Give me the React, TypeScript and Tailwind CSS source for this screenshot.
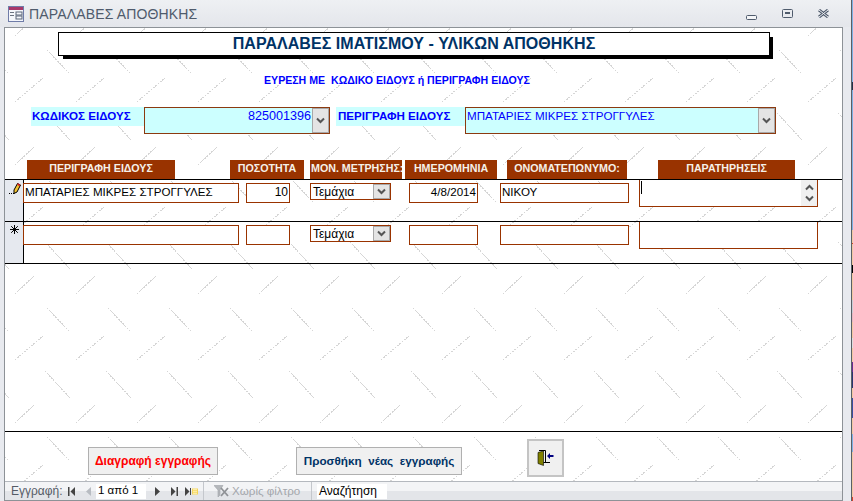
const desktopStrip = [
  'h-[82px] bg-[#7fb2e3]',
  'h-[8px] bg-[#223047]',
  'h-[140px] bg-[#7fb2e3]',
  'h-[13px] bg-[#f2c9a2]',
  'h-px bg-[#d8402a]',
  'h-[21px] bg-[#f2c9a2]',
  'h-[8px] bg-[#000000]',
  'h-[27px] bg-[#f2c9a2]',
  'h-[13px] bg-[#c9ced6]',
  'h-[9px] bg-[#e6b8c2]',
  'h-[16px] bg-[#f2c9a2]',
  'h-[10px] bg-[#dddddd]',
  'h-[14px] bg-[#f2c9a2]',
  'h-[10px] bg-[#6a2c91]',
  'h-[16px] bg-[#2a3570]',
  'h-[10px] bg-[#f2c9a2]',
  'h-[20px] bg-[#3a4ea0]',
  'h-[16px] bg-[#f2c9a2]',
  'h-[18px] bg-[#7fb2e3]',
  'h-[45px] bg-[#f2c9a2]',
  'h-[4px] bg-[#d8402a]',
]

const FormIcon = () => (
  <svg width="16" height="16" viewBox="0 0 16 16" className="mr-[5px] shrink-0">
    <rect x="0.5" y="0.5" width="15" height="15" fill="#f4f6fb" stroke="#6f7ca8" />
    <rect x="1" y="1" width="14" height="3" fill="#a8386a" />
    <rect x="2" y="6" width="4" height="1" fill="#6b7280" />
    <rect x="2" y="9" width="4" height="1" fill="#6b7280" />
    <rect x="8" y="6" width="6" height="3" fill="none" stroke="#5a6478" strokeWidth="1" />
    <rect x="8" y="10" width="6" height="3" fill="none" stroke="#5a6478" strokeWidth="1" />
  </svg>
)

const ComboArrow = ({ className }: { className: string }) => (
  <div className={`flex items-center justify-center border border-[#a8a8a8] bg-[#e4e4e4] ${className}`}>
    <svg width="9" height="7" viewBox="0 0 9 7">
      <path d="M1 1.5 L4.5 5 L8 1.5" fill="none" stroke="#555" strokeWidth="2" />
    </svg>
  </div>
)

const Pencil = () => (
  <svg width="13" height="14" viewBox="0 0 13 14">
    <path d="M6 8 L9.5 1.5 L12.5 3 L9 10 L6 11.5 Z" fill="#f2c230" stroke="#000" strokeWidth="1" />
    <path d="M9.5 2 L12 3.5" stroke="#d02020" strokeWidth="2" />
    <rect x="1" y="11" width="1" height="1" fill="#000" />
    <rect x="3" y="11" width="1" height="1" fill="#000" />
    <rect x="5" y="11" width="1" height="1" fill="#000" />
  </svg>
)

const NewRowStar = () => (
  <svg width="9" height="9" viewBox="0 0 9 9">
    <path d="M4.5 0 V9 M0 4.5 H9 M1.2 1.2 L7.8 7.8 M7.8 1.2 L1.2 7.8" stroke="#000" strokeWidth="1" />
  </svg>
)

const DoorIcon = () => (
  <svg width="18" height="16" viewBox="0 0 18 16">
    <path d="M1 2.5 L1 13.5 L6.5 15.5 L6.5 1 Z" fill="#808000" stroke="#000" strokeWidth="0.6" />
    <path d="M2 0.5 H8.5 V12.5 M6.5 12.5 H13" fill="none" stroke="#000" strokeWidth="1" />
    <path d="M10 6 L13 3 V5 H16.5 V7 H13 V9 Z" fill="#000080" />
  </svg>
)

const NavFirst = () => (
  <svg width="7" height="9" viewBox="0 0 7 9">
    <rect x="0" y="0" width="1.5" height="9" fill="#444" />
    <path d="M7 0 V9 L2.5 4.5 Z" fill="#444" />
  </svg>
)

const NavPrev = () => (
  <svg width="5" height="9" viewBox="0 0 5 9">
    <path d="M5 0 V9 L0 4.5 Z" fill="#b8bcc2" />
  </svg>
)

const NavNext = () => (
  <svg width="5" height="9" viewBox="0 0 5 9">
    <path d="M0 0 V9 L5 4.5 Z" fill="#444" />
  </svg>
)

const NavLast = () => (
  <svg width="7" height="9" viewBox="0 0 7 9">
    <path d="M0 0 V9 L4.5 4.5 Z" fill="#444" />
    <rect x="5.5" y="0" width="1.5" height="9" fill="#444" />
  </svg>
)

const NavNew = () => (
  <svg width="13" height="9" viewBox="0 0 13 9">
    <path d="M0 0 V9 L4.5 4.5 Z" fill="#444" />
    <rect x="5" y="1" width="1" height="7" fill="#444" />
    <rect x="7" y="1.5" width="6" height="6" fill="#f3d35a" />
    <path d="M8 2.5 H12 M8 4.5 H12 M8 6.5 H12 M9 1.5 V7.5 M11 1.5 V7.5" stroke="#fff3b8" strokeWidth="0.7" />
  </svg>
)

const FilterIcon = () => (
  <svg width="15" height="13" viewBox="0 0 15 13">
    <path d="M0 0.5 H9 L6 5 V10 L4 12 V5 Z" fill="#b4b7bb" stroke="#a0a3a8" strokeWidth="0.6" />
    <path d="M7 3 L14 11 M14 3 L7 11" stroke="#8f9296" strokeWidth="1.8" />
  </svg>
)

const RecordRow = ({ filled }: { filled: boolean }) => (
  <div className="flex h-[42px] items-start border-b border-black text-[11.6px]">
    <div className="flex h-full w-[19px] shrink-0 justify-center border-r border-black bg-[#e6e9ef] pt-[2px]">
      {filled ? <Pencil /> : <div className="pl-[1px] pt-[1px]"><NewRowStar /></div>}
    </div>
    <div className="-ml-px mt-[3px] flex h-[20px] w-[216px] items-center border border-[#993300] bg-white pb-[2px] pl-[1px] text-black">
      {filled && 'ΜΠΑΤΑΡΙΕΣ ΜΙΚΡΕΣ ΣΤΡΟΓΓΥΛΕΣ'}
    </div>
    <div className="ml-[7px] mt-[3px] flex h-[20px] w-[44px] items-center justify-end border border-[#993300] bg-white pb-[2px] pr-[1px] text-[12px] text-black">
      {filled && '10'}
    </div>
    <div className="ml-[20px] mt-[3px] flex h-[17px] w-[81px] items-center justify-between border border-[#993300] bg-white pl-[2px] text-[12px] text-black">
      Τεμάχια
      <ComboArrow className="h-[15px] w-[17px]" />
    </div>
    <div className="ml-[18px] mt-[3px] flex h-[20px] w-[69px] items-center justify-end border border-[#993300] bg-white pb-[2px] pr-[1px] text-black">
      {filled && '4/8/2014'}
    </div>
    <div className="ml-[22px] mt-[3px] flex h-[20px] w-[129px] items-center border border-[#993300] bg-white pb-[2px] pl-[1px] text-black">
      {filled && 'ΝΙΚΟΥ'}
    </div>
    <div className="ml-[10px] flex h-[27px] w-[179px] justify-between border-x border-b border-[#993300] bg-white">
      {filled && (
        <>
          <div className="ml-[1px] mt-[1px] h-[13px] w-px bg-black" />
          <div className="flex w-[16px] flex-col items-center justify-between bg-[#f0f0f0] py-[4px]">
            <svg width="9" height="7" viewBox="0 0 9 7">
              <path d="M1 5.5 L4.5 2 L8 5.5" fill="none" stroke="#555" strokeWidth="2" />
            </svg>
            <svg width="9" height="7" viewBox="0 0 9 7">
              <path d="M1 1.5 L4.5 5 L8 1.5" fill="none" stroke="#555" strokeWidth="2" />
            </svg>
          </div>
        </>
      )}
    </div>
  </div>
)

const App = () => {
  return (
    <div className="flex h-[501px] w-[853px] flex-col overflow-hidden bg-[#e8eaef] font-['Liberation_Sans',sans-serif] text-[12px] leading-none">
      {/* title bar */}
      <div className="flex h-[27px] shrink-0 items-center bg-gradient-to-b from-[#eef0f3] to-[#e4e6eb] pl-[8px]">
        <FormIcon />
        <span className="text-[14px] tracking-[0.15px] text-[#4f5b6c]">ΠΑΡΑΛΑΒΕΣ ΑΠΟΘΗΚΗΣ</span>
        <div className="ml-auto mr-[24px] flex items-center gap-[25px]">
          <svg width="11" height="5" viewBox="0 0 11 5" className="mt-[8px]">
            <rect x="0.5" y="0.5" width="10" height="4" rx="1" fill="#f4f5f7" stroke="#4f5b6c" />
          </svg>
          <svg width="11" height="9" viewBox="0 0 11 9">
            <rect x="0.5" y="0.5" width="10" height="8" rx="1" fill="none" stroke="#4f5b6c" />
            <rect x="3" y="3" width="5" height="2" fill="#4f5b6c" />
          </svg>
          <svg width="11" height="9" viewBox="0 0 11 9">
            <path d="M1 1 L10 8 M10 1 L1 8" stroke="#4f5b6c" strokeWidth="3" />
            <path d="M1 1 L10 8 M10 1 L1 8" stroke="#eef0f3" strokeWidth="1" />
          </svg>
        </div>
      </div>

      <div className="flex flex-1">
        <div className="w-[4px]" />
        <div className="flex w-[839px] flex-col border border-[#8d9297]">
          <div className="relative z-0 flex flex-1 flex-col bg-white">
            {/* tiled form background */}
            <svg className="absolute inset-0 -z-10 h-full w-full">
              <defs>
                <pattern id="tile" x="5" y="-11" width="61" height="129" patternUnits="userSpaceOnUse">
                  <g stroke="#d6d6d6" strokeWidth="1" strokeDasharray="2 1" shapeRendering="crispEdges">
                    <line x1="5" y1="19" x2="25" y2="0" />
                    <line x1="37" y1="33" x2="60" y2="57" />
                    <line x1="5" y1="85" x2="33" y2="61" />
                    <line x1="35" y1="96" x2="60" y2="123" />
                  </g>
                </pattern>
              </defs>
              <rect width="100%" height="100%" fill="url(#tile)" />
            </svg>

            <div className="ml-[53px] mt-[4px] flex h-[24px] w-[712px] items-center justify-center border border-black bg-white text-[16px] font-bold tracking-[0.05px] text-[#003366] shadow-[4px_4px_0_-1px_#000]">
              ΠΑΡΑΛΑΒΕΣ ΙΜΑΤΙΣΜΟΥ - ΥΛΙΚΩΝ ΑΠΟΘΗΚΗΣ
            </div>

            <div className="ml-[259px] mt-[18px] h-[12px] whitespace-pre text-[10.6px] font-bold leading-[12px] text-[#0000ff]">
              {'ΕΥΡΕΣΗ ΜΕ  ΚΩΔΙΚΟ ΕΙΔΟΥΣ ή ΠΕΡΙΓΡΑΦΗ ΕΙΔΟΥΣ'}
            </div>

            {/* search row */}
            <div className="ml-[26px] mt-[21px] flex h-[27px] items-start text-[11.6px] text-[#0000ff]">
              <div className="h-[19px] w-[113px] bg-[#ccffff] pl-[1px] pt-[3px] font-bold">ΚΩΔΙΚΟΣ ΕΙΔΟΥΣ</div>
              <div className="flex h-[27px] w-[186px] items-start justify-end border border-[#8b3a10] bg-[#ccffff]">
                <span className="mr-[1px] pt-[2px] text-[12.6px]">825001396</span>
                <ComboArrow className="h-[25px] w-[17px]" />
              </div>
              <div className="ml-[6px] h-[19px] w-[129px] bg-[#ccffff] pl-[2px] pt-[3px] font-bold">ΠΕΡΙΓΡΑΦΗ ΕΙΔΟΥΣ</div>
              <div className="flex h-[27px] w-[311px] items-start justify-between border border-[#8b3a10] bg-[#ccffff]">
                <span className="ml-[1px] pt-[2px]">ΜΠΑΤΑΡΙΕΣ ΜΙΚΡΕΣ ΣΤΡΟΓΓΥΛΕΣ</span>
                <ComboArrow className="h-[25px] w-[17px]" />
              </div>
            </div>

            {/* column headers */}
            <div className="mt-[26px] flex h-[19px] items-start text-center text-[10.7px] font-bold text-[#f5f0e8]">
              <div className="ml-[22px] h-[19px] w-[148px] bg-[#993300] pt-[3px]">ΠΕΡΙΓΡΑΦΗ ΕΙΔΟΥΣ</div>
              <div className="ml-[55px] h-[19px] w-[74px] bg-[#993300] pt-[3px]">ΠΟΣΟΤΗΤΑ</div>
              <div className="ml-[6px] h-[19px] w-[92px] overflow-hidden whitespace-nowrap bg-[#993300] pl-[1px] pt-[3px] text-left">ΜΟΝ. ΜΕΤΡΗΣΗΣ:</div>
              <div className="ml-[3px] h-[19px] w-[92px] bg-[#993300] pt-[3px]">ΗΜΕΡΟΜΗΝΙΑ</div>
              <div className="ml-[10px] h-[19px] w-[120px] bg-[#993300] pt-[3px]">ΟΝΟΜΑΤΕΠΩΝΥΜΟ:</div>
              <div className="ml-[31px] h-[19px] w-[137px] bg-[#993300] pt-[3px]">ΠΑΡΑΤΗΡΗΣΕΙΣ</div>
            </div>

            {/* records */}
            <div className="border-t border-black">
              <RecordRow filled />
              <RecordRow filled={false} />
            </div>

            <div className="flex-1" />

            {/* form footer */}
            <div className="flex h-[50px] items-start border-t border-black">
              <button className="ml-[83px] mt-[15px] h-[28px] w-[130px] border border-[#b0b0b0] bg-[#f0f0f0] text-[12px] font-bold text-[#ff0000]">
                Διαγραφή εγγραφής
              </button>
              <button className="ml-[78px] mt-[15px] h-[28px] w-[166px] whitespace-pre border border-[#b0b0b0] bg-[#f0f0f0] text-[11.7px] font-bold text-[#003366]">
                {'Προσθήκη  νέας  εγγραφής'}
              </button>
              <button className="ml-[65px] mt-[7px] flex h-[38px] w-[37px] items-center justify-center border-2 border-[#c4c4c4] bg-[#f0f0f0]">
                <DoorIcon />
              </button>
            </div>
          </div>

          {/* record navigation bar */}
          <div className="flex h-[19px] shrink-0 items-center border-t border-[#b4b8be] bg-[linear-gradient(#f3f4f6_0,#f3f4f6_50%,#e3e5e9_50%,#e3e5e9_100%)] text-[#555b66]">
            <span className="ml-[6px] w-[49px] shrink-0 whitespace-nowrap">Εγγραφή:</span>
            <div className="ml-[8px] flex"><NavFirst /></div>
            <div className="ml-[11px] flex"><NavPrev /></div>
            <div className="ml-[5px] flex h-[15px] w-[50px] items-center bg-white pl-[2px] text-[11.5px] text-black">1 από 1</div>
            <div className="ml-[9px] flex"><NavNext /></div>
            <div className="ml-[11px] flex"><NavLast /></div>
            <div className="ml-[7px] flex"><NavNew /></div>
            <div className="ml-[5px] h-full w-px bg-[#c4c7cc]" />
            <div className="ml-[10px] flex"><FilterIcon /></div>
            <span className="ml-[3px] w-[68px] shrink-0 whitespace-nowrap text-[11.6px] text-[#a4a7ac]">Χωρίς φίλτρο</span>
            <div className="ml-[11px] h-full w-px bg-[#c4c7cc]" />
            <div className="ml-[5px] flex h-[15px] w-[70px] items-center bg-white pl-[2px] text-black">Αναζήτηση</div>
          </div>
        </div>
        <div className="w-[8px]" />
      </div>
    </div>
  )
}

const Page = () => (
  <div className="relative h-[501px] w-[853px] overflow-hidden">
    <App />
    {/* edge of the desktop behind the window */}
    <div className="absolute right-0 top-0 flex h-full w-[2px]">
      <div className="w-px bg-[#5a5f66]" />
      <div className="flex w-px flex-col">
        {desktopStrip.map((c, i) => (
          <div key={i} className={c} />
        ))}
      </div>
    </div>
  </div>
)

export default Page
